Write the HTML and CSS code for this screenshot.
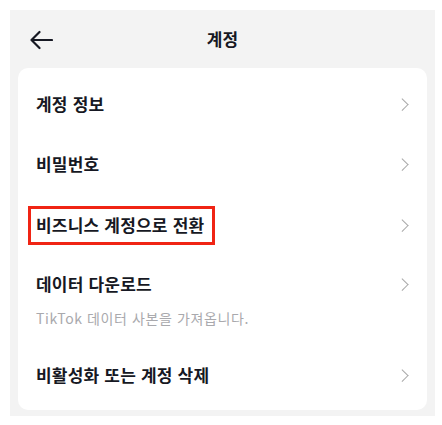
FILE: index.html
```html
<!DOCTYPE html>
<html lang="ko">
<head>
<meta charset="utf-8">
<link rel="stylesheet" href="styles.css">
</head>
<body>
<div class="panel">
  <header class="header">
    <div class="back">
      <svg width="24" height="20" viewBox="0 0 24 20"><path d="M2.5 10H23M10.5 2L2.5 10L10.5 18" fill="none" stroke="#161823" stroke-width="2.2" stroke-linecap="round" stroke-linejoin="round"/></svg>
    </div>
    <h1 class="title">계정</h1>
    <div></div>
  </header>
  <div class="card">
    <div class="row"><div class="text"><div class="label">계정 정보</div></div><span class="chev"></span></div>
    <div class="row"><div class="text"><div class="label">비밀번호</div></div><span class="chev"></span></div>
    <div class="row"><div class="text"><div class="label boxed">비즈니스 계정으로 전환</div></div><span class="chev"></span></div>
    <div class="row tall"><div class="text"><div class="label">데이터 다운로드</div><div class="sub">TikTok 데이터 사본을 가져옵니다.</div></div><span class="chev"></span></div>
    <div class="row"><div class="text"><div class="label">비활성화 또는 계정 삭제</div></div><span class="chev"></span></div>
  </div>
</div>
</body>
</html>
```
FILE: styles.css
```css
* { box-sizing: border-box; }
html, body { margin: 0; padding: 0; background: #fff; }
body { font-family: "Noto Sans CJK KR", "Noto Sans", sans-serif; color: #161823; }
.panel {
  margin: 10px 0 0 10px;
  width: 425px;
  height: 406px;
  background: #f3f3f3;
  padding: 0 8px;
}
.header {
  height: 58px;
  display: grid;
  grid-template-columns: 1fr auto 1fr;
  align-items: center;
}
.back { display: flex; align-items: center; padding-left: 11px; padding-top: 1px; }
.back svg { display: block; }
.title { margin: 0; font-size: 17px; font-weight: 700; line-height: 22px; }
.card {
  background: #fff;
  border-radius: 10px;
  padding: 6px 0 5px;
}
.row {
  display: flex;
  align-items: center;
  justify-content: space-between;
  padding: 19px 19px 19px 18px;
}
.row.tall { align-items: flex-start; padding-top: 17px; padding-bottom: 18px; }
.row.tall .chev { margin-top: 7px; }
.label { font-size: 17px; font-weight: 700; line-height: 22px; letter-spacing: 0.2px; }
.boxed {
  display: inline-block;
  border: 3px solid #f02414;
  padding: 5.5px 8px 5.5px 5px;
  margin: -8.5px 0 -8.5px -8px;
}
.sub { margin-top: 14px; font-size: 14px; line-height: 18px; color: #a9a9ad; font-weight: 400; letter-spacing: 0.6px; }
.chev {
  width: 8.5px; height: 8.5px;
  border-right: 1.6px solid #a8a8a8;
  border-top: 1.6px solid #a8a8a8;
  transform: rotate(45deg);
  margin-right: 2px;
}
```
